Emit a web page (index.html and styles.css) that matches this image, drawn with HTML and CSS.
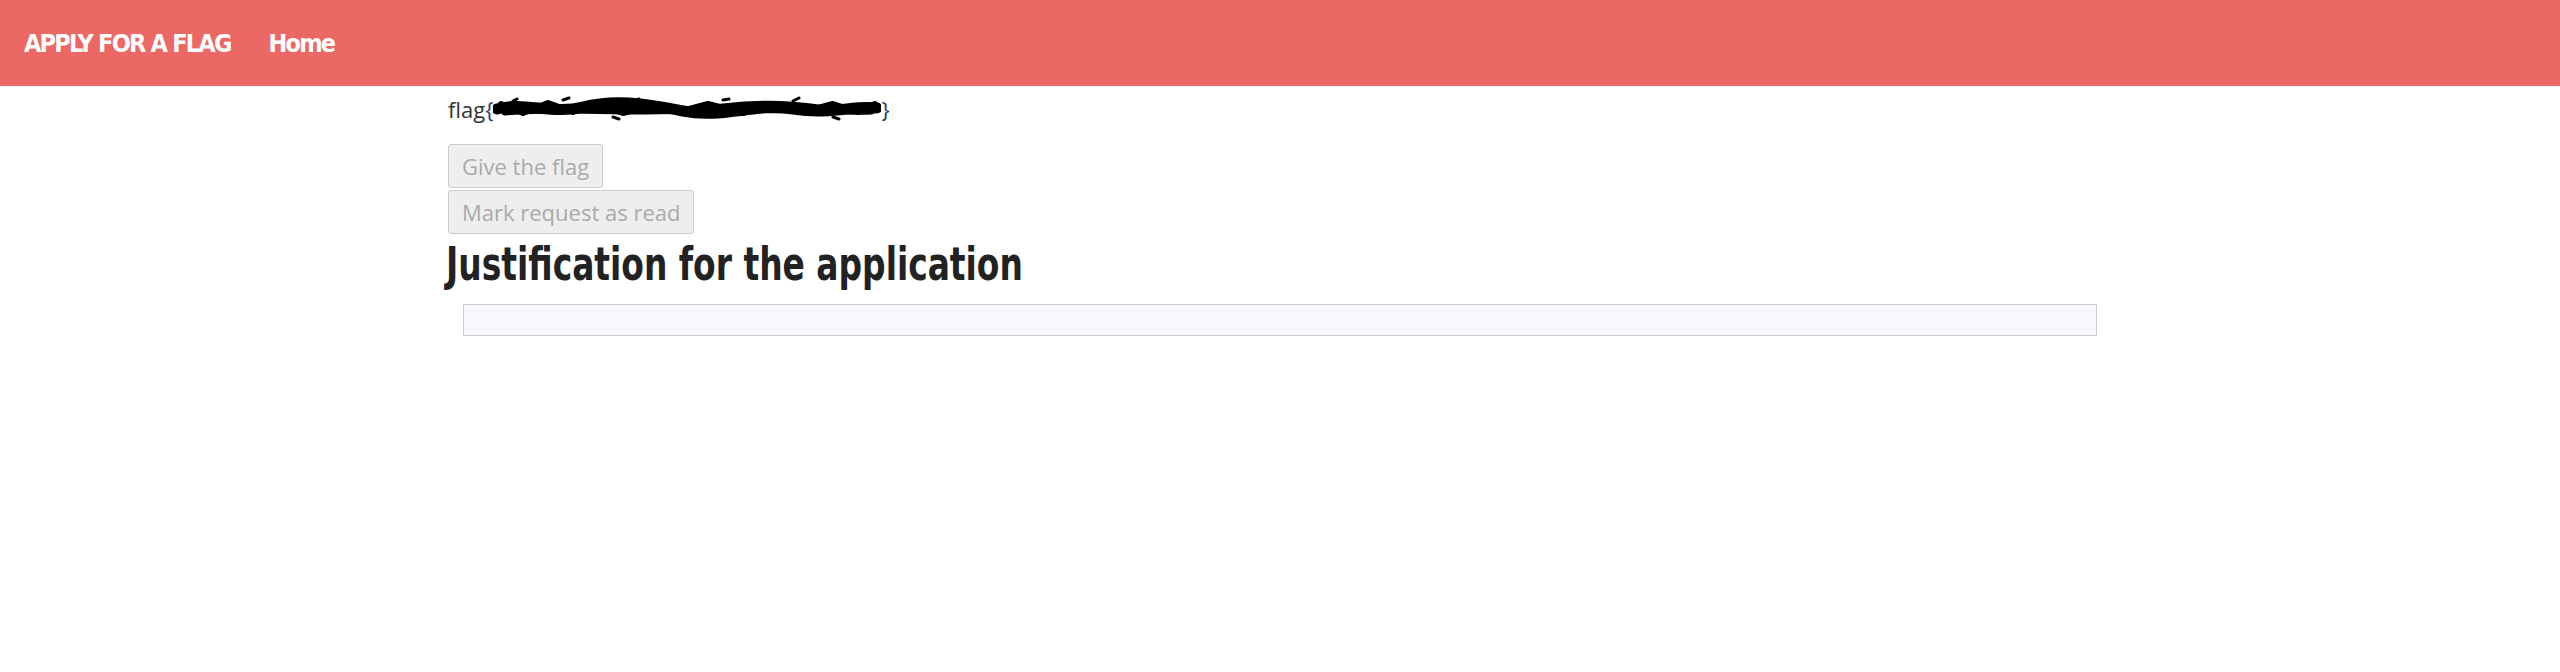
FILE: index.html
```html
<!DOCTYPE html>
<html>
<head>
<meta charset="utf-8">
<link rel="stylesheet" href="styles.css">
</head>
<body>
<nav class="navbar">
  <a class="brand">APPLY FOR A FLAG</a>
  <a class="nav-link">Home</a>
</nav>
<main class="container">
  <p class="flag">flag<span class="brace">{</span><svg class="redact" width="388" height="26" viewBox="0 0 388 26"><path d="M4 13 C 30 5, 60 19, 90 11 S 150 7, 190 15 S 260 7, 300 13 S 360 9, 384 12" stroke="#000" stroke-width="11" fill="none" stroke-linecap="round"/><path d="M8 8 L 30 17 L 55 7 L 80 16 L 100 8 L 130 17 L 160 9 L 185 16 L 215 8 L 250 17 L 280 9 L 310 16 L 340 8 L 365 16 L 382 8" stroke="#000" stroke-width="6" fill="none" stroke-linecap="round" stroke-linejoin="round"/><path d="M12 16 C 80 10, 150 20, 230 11 S 330 18, 378 15" stroke="#000" stroke-width="7" fill="none" stroke-linecap="round"/><path d="M20 5 L 24 3 M70 4 L 76 2 M140 5 L 146 3 M230 4 L 236 3 M300 5 L 306 2 M340 21 L 346 23 M120 21 L 126 23" stroke="#000" stroke-width="3" fill="none" stroke-linecap="round"/></svg><span class="brace">}</span></p>
  <div class="actions">
    <button class="btn" disabled>Give the flag</button>
    <button class="btn" disabled>Mark request as read</button>
  </div>
  <h2 class="title">Justification for the application</h2>
  <div class="well"></div>
</main>
</body>
</html>
```
FILE: styles.css
```css
body {
  margin: 0;
  font-family: "Open Sans", "Noto Sans", sans-serif;
  color: #333;
  background: #fff;
}
.navbar {
  height: 86px;
  background: #eb6864;
  display: flex;
  align-items: center;
  padding-left: 24px;
  gap: 38px;
}
.brand, .nav-link {
  font-family: "DejaVu Sans", sans-serif;
  font-stretch: condensed;
  font-weight: bold;
  font-size: 25px;
  letter-spacing: -1.8px;
  color: #fff;
  display: inline-block;
}
.container {
  width: 1664px;
  margin: 0 auto;
}
.flag {
  margin: 8px 0 0;
  font-size: 22px;
  line-height: 30px;
  display: flex;
  align-items: center;
}
.brace { color: #1c3f6e; }
.redact { display: block; }
.actions {
  margin-top: 20px;
  display: flex;
  flex-direction: column;
  align-items: flex-start;
  gap: 2px;
}
.btn {
  font-family: "Open Sans", "Noto Sans", sans-serif;
  font-size: 22px;
  height: 44px;
  padding: 0 13px;
  background: #eee;
  color: #aaa;
  border: 1px solid #ccc;
  border-radius: 3px;
}
.title {
  font-family: "DejaVu Sans", sans-serif;
  font-stretch: condensed;
  font-weight: bold;
  font-size: 46px;
  color: #222;
  margin: 4px 0 0 -2px;
  line-height: 52px;
  transform: scaleX(0.795);
  transform-origin: left center;
}
.well {
  margin: 14px 15px 0;
  height: 30px;
  background: #f7f8fc;
  border: 1px solid #ccc;
}
```
